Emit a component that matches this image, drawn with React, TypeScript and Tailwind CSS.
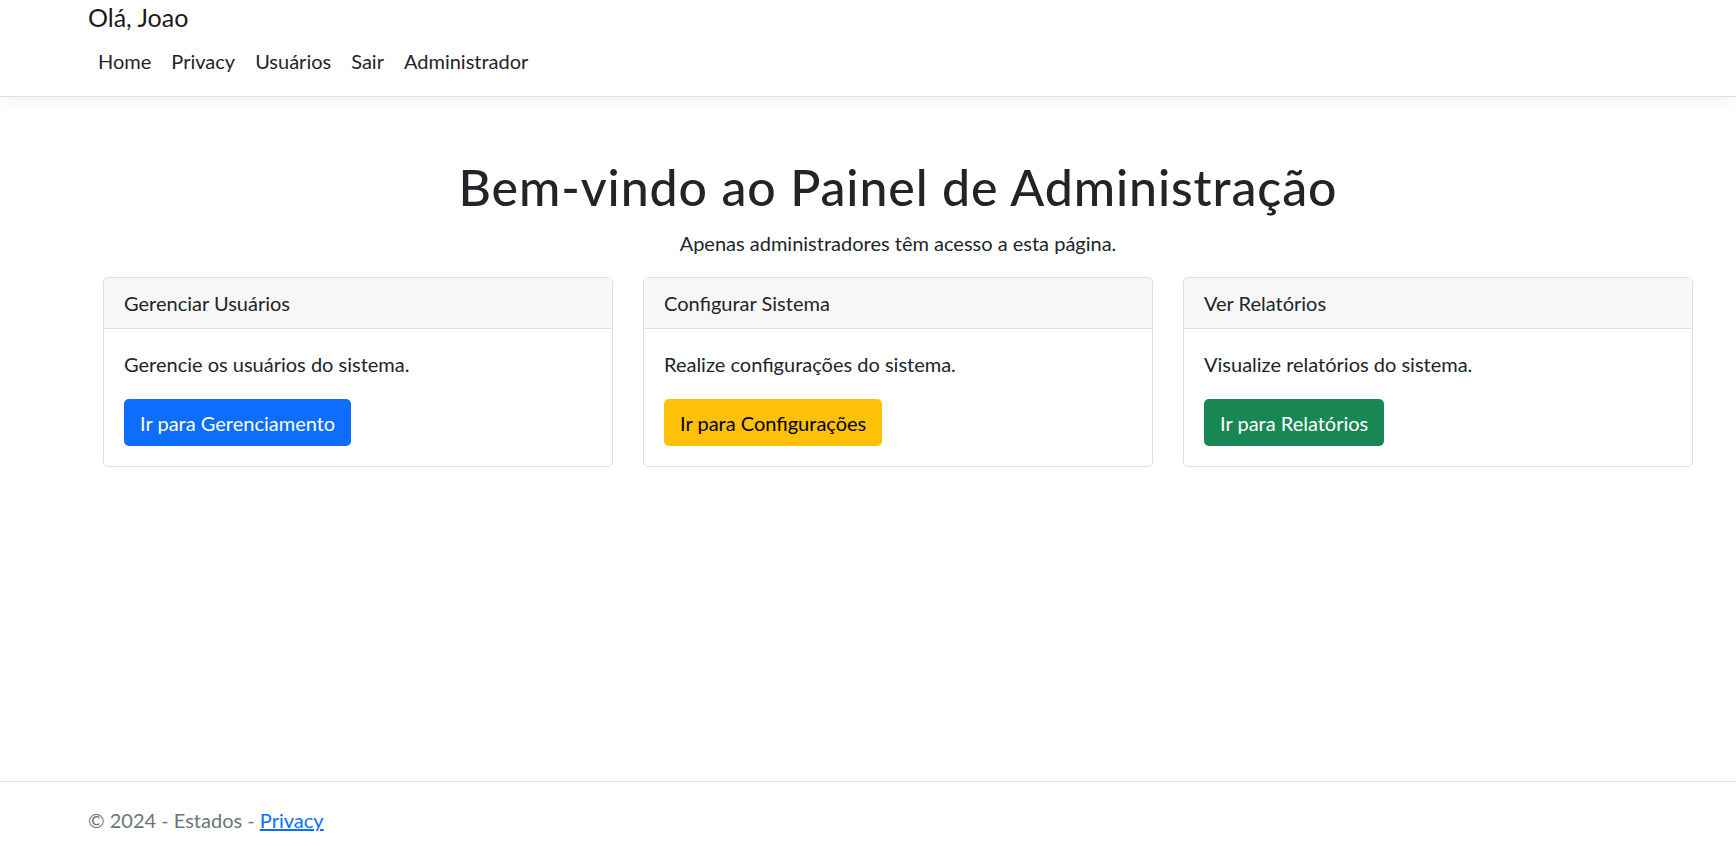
import React from "react";

const navLinks = ["Home", "Privacy", "Usuários", "Sair", "Administrador"];

const cards = [
  {
    title: "Gerenciar Usuários",
    text: "Gerencie os usuários do sistema.",
    action: "Ir para Gerenciamento",
    btn: "bg-[#0d6efd] text-white",
  },
  {
    title: "Configurar Sistema",
    text: "Realize configurações do sistema.",
    action: "Ir para Configurações",
    btn: "bg-[#ffc107] text-black",
  },
  {
    title: "Ver Relatórios",
    text: "Visualize relatórios do sistema.",
    action: "Ir para Relatórios",
    btn: "bg-[#198754] text-white",
  },
];

function AdminCard({ title, text, action, btn }: (typeof cards)[number]) {
  return (
    <div className="flex flex-col rounded-[5px] border border-[#dfdfdf] bg-white">
      <div className="rounded-t-[5px] border-b border-[#dfdfdf] bg-[#f7f7f7] px-[20px] py-[10px] leading-[30px]">
        {title}
      </div>
      <div className="p-[20px]">
        <p className="mb-[20px] leading-[30px]">{text}</p>
        <button
          className={`flex h-[47px] items-center rounded-[5px] px-[16px] leading-[30px] ${btn}`}
        >
          {action}
        </button>
      </div>
    </div>
  );
}

export default function App() {
  return (
    <div
      className="flex h-[846px] flex-col overflow-hidden bg-white text-[20px] text-[#212529]"
      style={{ fontFamily: 'Lato, "Liberation Sans", Arial, sans-serif' }}
    >
      <header className="relative z-10 border-b border-[#dee2e6] bg-white shadow-[0_5px_15px_rgba(0,0,0,0.05)]">
        <div className="ml-[88px] w-[1620px] pb-[10px]">
          <div className="text-[25px] leading-[35px] text-[#1a1a1a]">Olá, Joao</div>
          <nav className="mt-[1px] flex">
            {navLinks.map((link) => (
              <a key={link} className="px-[10px] py-[10px] leading-[30px] text-[#212529]">
                {link}
              </a>
            ))}
          </nav>
        </div>
      </header>

      <main className="flex-1">
        <div className="ml-[88px] w-[1620px]">
          <div className="px-[15px]">
            <div className="text-center">
              <h1 className="mt-[60px] mb-[11px] text-[50px] font-medium leading-[60px] tracking-[0.9px]">
                Bem-vindo ao Painel de Administração
              </h1>
              <p className="mb-[19px] leading-[30px]">
                Apenas administradores têm acesso a esta página.
              </p>
            </div>
            <div className="grid grid-cols-3 gap-x-[30px]">
              {cards.map((card) => (
                <AdminCard key={card.title} {...card} />
              ))}
            </div>
          </div>
        </div>
      </main>

      <footer className="h-[65px] overflow-hidden border-t border-[#dee2e6] text-[#6c757d]">
        <div className="ml-[88px] w-[1620px] whitespace-nowrap leading-[76px]">
          © 2024 - Estados -{" "}
          <a className="text-[#0d6efd] underline">Privacy</a>
        </div>
      </footer>
    </div>
  );
}
